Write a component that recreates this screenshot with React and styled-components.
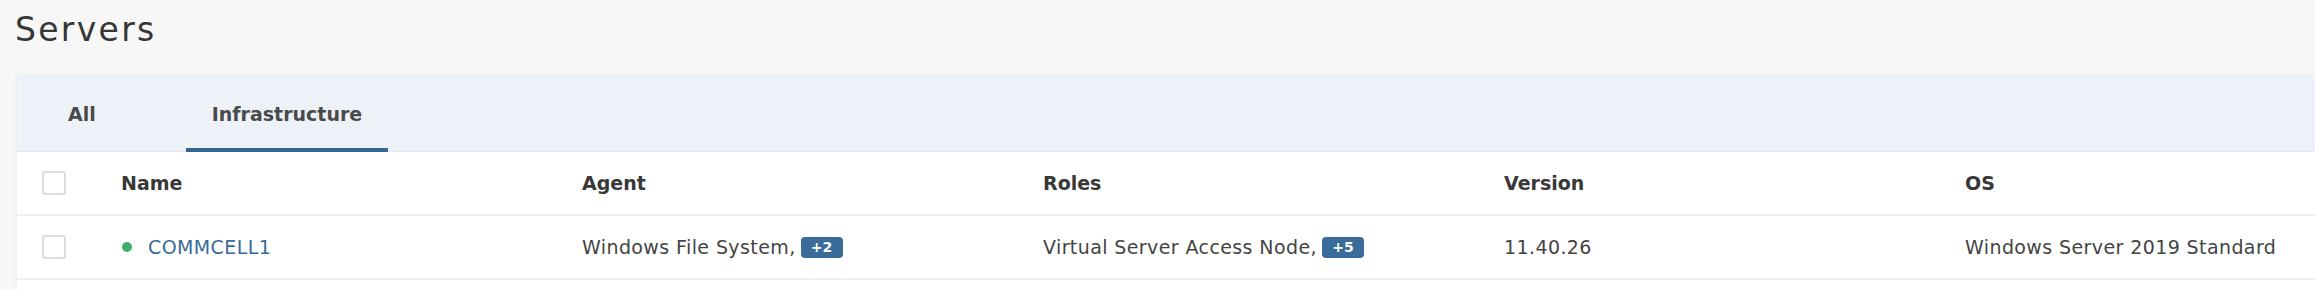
import styled, { createGlobalStyle } from 'styled-components';

const GlobalStyle = createGlobalStyle`
body {
    margin: 0;
    background-color: #f7f7f7;
    font-family: 'DejaVu Sans', 'Liberation Sans', sans-serif;
    overflow: hidden;
}
`

const colunas = ['Name', 'Agent', 'Roles', 'Version', 'OS'];

const servidores = [
    {
        nome: 'COMMCELL1',
        online: true,
        agente: 'Windows File System,',
        agentesExtra: 2,
        funcao: 'Virtual Server Access Node,',
        funcoesExtra: 5,
        versao: '11.40.26',
        so: 'Windows Server 2019 Standard'
    }
];

export default function App() {
    const abas = ['All', 'Infrastructure'];
    const abaAtiva = 'Infrastructure';

    return (
        <>
            <GlobalStyle />
            <Pagina>
                <Titulo>Servers</Titulo>
                <Painel>
                    <Abas>
                        {abas.map((aba) => (
                            <Aba key={aba} ativa={aba === abaAtiva}>{aba}</Aba>
                        ))}
                    </Abas>
                    <Tabela>
                        <Linha>
                            <Celula><Caixa /></Celula>
                            {colunas.map((c) => <Cabecalho key={c}>{c}</Cabecalho>)}
                        </Linha>
                        {servidores.map((s) => (
                            <Linha key={s.nome}>
                                <Celula><Caixa /></Celula>
                                <Celula>
                                    <Status online={s.online} />
                                    <Link>{s.nome}</Link>
                                </Celula>
                                <Celula>{s.agente}<Badge>+{s.agentesExtra}</Badge></Celula>
                                <Celula>{s.funcao}<Badge>+{s.funcoesExtra}</Badge></Celula>
                                <Celula>{s.versao}</Celula>
                                <Celula>{s.so}</Celula>
                            </Linha>
                        ))}
                    </Tabela>
                </Painel>
            </Pagina>
        </>
    )
}

const Pagina = styled.div`
width: 100%;
min-height: 290px;
`
const Titulo = styled.h1`
margin: 0;
height: 76px;
box-sizing: border-box;
padding: 13px 0 0 15px;
font-size: 33px;
line-height: 33px;
font-weight: 400;
letter-spacing: 2.3px;
color: #363636;
`
const Painel = styled.div`
margin-left: 17px;
width: 2420px;
min-height: 240px;
background-color: #ffffff;
box-shadow: 0 0 4px rgba(0, 0, 0, 0.08);
`
const Abas = styled.div`
display: flex;
gap: 64px;
height: 76px;
padding-left: 25px;
background-color: #edf1f8;
border-bottom: 1px solid #e4e7ee;
box-sizing: border-box;
`
const Aba = styled.div`
display: flex;
align-items: center;
padding: 4px 26px 0 26px;
box-sizing: border-box;
font-size: 19px;
font-weight: 700;
color: #4a4a4a;
border-bottom: 4px solid ${props => props.ativa ? '#35648f' : 'transparent'};
margin-bottom: -1px;
`
const Tabela = styled.div`
display: flex;
flex-direction: column;
`
const Linha = styled.div`
display: grid;
grid-template-columns: 104px repeat(5, 461px);
height: 64px;
box-sizing: border-box;
border-bottom: 2px solid #efefef;
`
const Celula = styled.div`
display: flex;
align-items: center;
font-size: 19px;
letter-spacing: 0.4px;
color: #444444;
white-space: nowrap;
&:first-child {
    padding-left: 25px;
}
`
const Cabecalho = styled(Celula)`
font-weight: 700;
letter-spacing: 0;
color: #383838;
`
const Caixa = styled.div`
width: 24px;
height: 24px;
box-sizing: border-box;
border: 2px solid #dcdcdc;
border-radius: 3px;
background-color: #ffffff;
`
const Status = styled.span`
width: 10px;
height: 10px;
border-radius: 50%;
margin: 0 16px 0 1px;
background-color: ${props => props.online ? '#3daf6a' : '#c4c4c4'};
`
const Link = styled.span`
color: #3a6a9a;
letter-spacing: 0.4px;
`
const Badge = styled.span`
display: inline-flex;
align-items: center;
justify-content: center;
width: 42px;
height: 21px;
margin-left: 5px;
border-radius: 4px;
background-color: #3a6c9a;
color: #ffffff;
font-size: 14px;
font-weight: 700;
letter-spacing: 0;
`
